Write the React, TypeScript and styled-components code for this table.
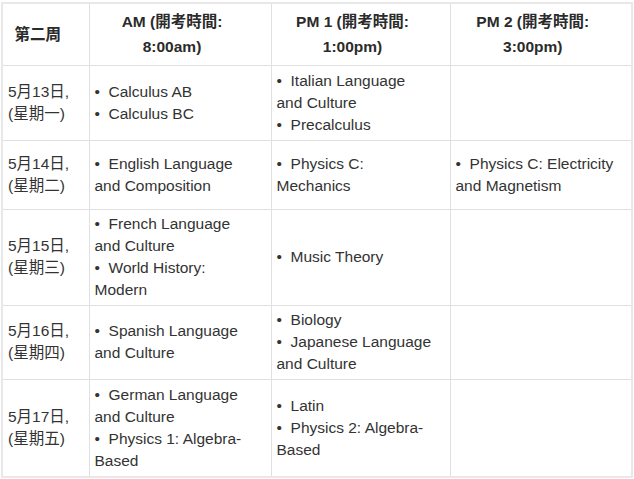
import styled, { createGlobalStyle } from "styled-components";

const GlobalStyle = createGlobalStyle`
  body {
    margin: 0;
    background: #fff;
    font-family: "Liberation Sans", "Noto Sans CJK TC", Arial, sans-serif;
  }
`

type Row = {
  date: string;
  day: string;
  height: number;
  am: string[];
  pm1: string[];
  pm2: string[];
};

// line breaks inside items follow the original column wrapping
const rows: Row[] = [
  { date: "5月13日,", day: "(星期一)", height: 75, am: ["Calculus AB", "Calculus BC"], pm1: ["Italian Language\nand Culture", "Precalculus"], pm2: [] },
  { date: "5月14日,", day: "(星期二)", height: 69, am: ["English Language\nand Composition"], pm1: ["Physics C:\nMechanics"], pm2: ["Physics C: Electricity\nand Magnetism"] },
  { date: "5月15日,", day: "(星期三)", height: 96, am: ["French Language\nand Culture", "World History:\nModern"], pm1: ["Music Theory"], pm2: [] },
  { date: "5月16日,", day: "(星期四)", height: 74, am: ["Spanish Language\nand Culture"], pm1: ["Biology", "Japanese Language\nand Culture"], pm2: [] },
  { date: "5月17日,", day: "(星期五)", height: 98, am: ["German Language\nand Culture", "Physics 1: Algebra-\nBased"], pm1: ["Latin", "Physics 2: Algebra-\nBased"], pm2: [] },
];

function Items({ list }: { list: string[] }) {
  return (
    <>
      {list.map((item) => (
        <Item key={item}>{"•\u00a0\u00a0" + item}</Item>
      ))}
    </>
  );
}

export default function App() {
  return (
    <Page>
      <GlobalStyle />
      <Table>
        <colgroup>
          <col style={{ width: 87 }} />
          <col style={{ width: 182 }} />
          <col style={{ width: 179 }} />
          <col style={{ width: 182 }} />
        </colgroup>
        <thead>
          <HeadRow>
            <HeadCell>第二周</HeadCell>
            <HeadCell>AM (開考時間:<br />8:00am)</HeadCell>
            <HeadCell>PM 1 (開考時間:<br />1:00pm)</HeadCell>
            <HeadCell>PM 2 (開考時間:<br />3:00pm)</HeadCell>
          </HeadRow>
        </thead>
        <tbody>
          {rows.map((r) => (
            <BodyRow key={r.date} $h={r.height}>
              <DateCell>
                {r.date}
                <br />
                {r.day}
              </DateCell>
              <Cell><Items list={r.am} /></Cell>
              <Cell><Items list={r.pm1} /></Cell>
              <Cell><Items list={r.pm2} /></Cell>
            </BodyRow>
          ))}
        </tbody>
      </Table>
    </Page>
  );
}

const Page = styled.div`
  padding: 2px 0 0 1px;
`

const Table = styled.table`
  width: 631px;
  table-layout: fixed;
  border-collapse: collapse;
  border: 2px solid #e8e8e8;
  color: #333;
  font-size: 15.5px;
`

const HeadRow = styled.tr`
  height: 62px;
`

const HeadCell = styled.th`
  border: 1px solid #e0e0e0;
  padding: 3px 22px 3px 6px;
  font-weight: bold;
  line-height: 25px;
  text-align: center;
  vertical-align: middle;
  white-space: nowrap;
  color: #2b2b2b;
`

const BodyRow = styled.tr<{ $h: number }>`
  height: ${(p) => p.$h}px;
`

const Cell = styled.td`
  border: 1px solid #e0e0e0;
  padding: 3px 4px 3px 5px;
  line-height: 22px;
  vertical-align: middle;
  text-align: left;
  white-space: pre;
`

const DateCell = styled(Cell)`
  padding-left: 5px;
`

const Item = styled.div``
